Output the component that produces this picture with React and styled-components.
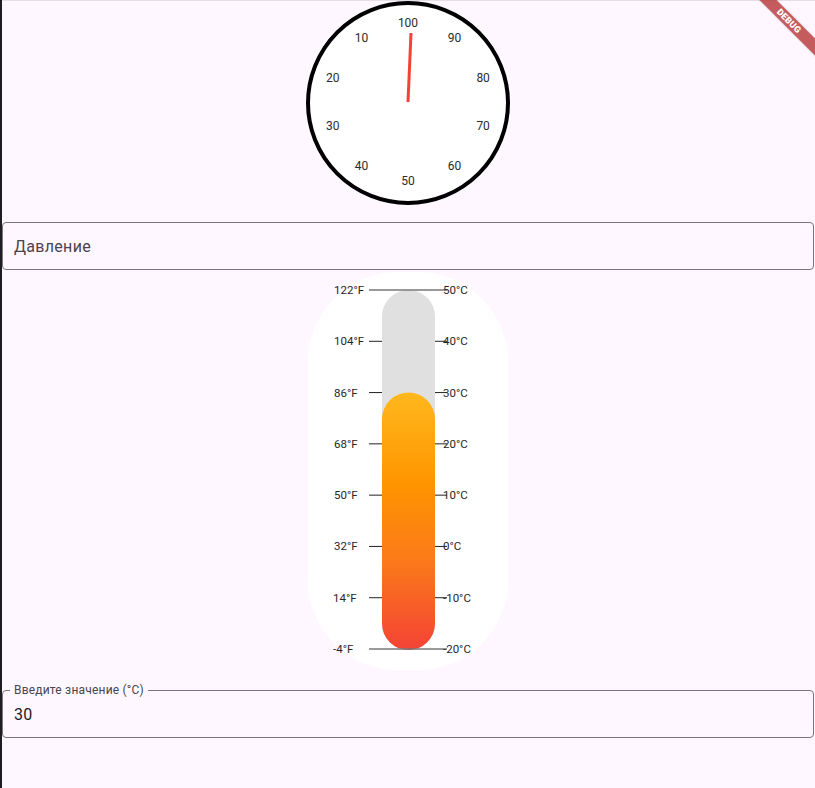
import React from "react";
import styled, { createGlobalStyle } from "styled-components";

const Global = createGlobalStyle`
  html, body { margin: 0; padding: 0; }
  body {
    background: #fef7ff;
    font-family: Roboto, "Noto Sans", "Liberation Sans", sans-serif;
    overflow: hidden;
  }
`;

const Screen = styled.div`
  position: relative;
  width: 815px;
  height: 788px;
  overflow: hidden;
  display: flex;
  background: #fef7ff;
`;

const EdgeStrip = styled.div`
  width: 2px;
  flex: 0 0 2px;
  background: #1f1d22;
`;

const Content = styled.div`
  flex: 1;
  display: flex;
  flex-direction: column;
  align-items: center;
  padding: 0 1px 0 0;
  border-top: 1px solid #e4dfe6;
`;

const GaugeSvg = styled.svg`
  display: block;
  width: 204px;
  height: 204px;
  margin-top: 0;
`;

const FieldBox = styled.div`
  box-sizing: border-box;
  align-self: stretch;
  height: 48px;
  margin-top: ${(p) => p.$mt}px;
  border: 1px solid #79747e;
  border-radius: 4px;
  display: flex;
  align-items: center;
  padding: 0 11px;
  position: relative;
`;

const Placeholder = styled.span`
  font-size: 16px;
  color: #49454f;
  letter-spacing: 0.3px;
`;

const Value = styled.span`
  font-size: 16px;
  color: #1d1b20;
  letter-spacing: 0.3px;
`;

const FloatLabel = styled.span`
  position: absolute;
  top: -8px;
  left: 7px;
  padding: 0 4px;
  background: #fef7ff;
  font-size: 12px;
  line-height: 14px;
  color: #49454f;
  letter-spacing: 0.2px;
`;

const ThermoCard = styled.div`
  width: 200px;
  height: 398px;
  margin-top: 2px;
  background: #ffffff;
  border-radius: 90px;
`;

const ThermoSvg = styled.svg`
  display: block;
  width: 200px;
  height: 398px;
`;

const Banner = styled.div`
  position: absolute;
  top: 15px;
  left: 729px;
  width: 120px;
  height: 12px;
  transform: rotate(45deg);
  background: rgba(176, 40, 40, 0.75);
  box-shadow: 0 0 2px rgba(0, 0, 0, 0.25);
  color: #fff;
  font-family: Roboto, "Liberation Sans", sans-serif;
  font-weight: 900;
  font-size: 9px;
  line-height: 12px;
  text-align: center;
  letter-spacing: 0.2px;
`;

function Gauge() {
  const cx = 102;
  const cy = 102;
  const labels = [];
  for (let i = 0; i < 10; i++) {
    const v = i === 0 ? 100 : i * 10;
    const th = (i * 36 * Math.PI) / 180;
    const x = cx - 79 * Math.sin(th);
    const y = cy - 1 - 79 * Math.cos(th);
    labels.push(
      <text
        key={v}
        x={x}
        y={y}
        textAnchor="middle"
        dominantBaseline="central"
        fontSize="12"
        fill="#2b2b2b"
        fontFamily="Roboto, sans-serif"
      >
        {v}
      </text>
    );
  }
  return (
    <GaugeSvg viewBox="0 0 204 204">
      <circle cx={cx} cy={cy} r={100} fill="#fff" stroke="#000" strokeWidth="4" />
      {labels}
      <line x1={102} y1={101} x2={105} y2={32} stroke="#f44336" strokeWidth="3" />
    </GaugeSvg>
  );
}

function Thermometer({ value }) {
  const top = 18;
  const bottom = 377;
  const max = 50;
  const min = -20;
  const yFor = (c) => top + ((max - c) / (max - min)) * (bottom - top);
  const steps = [];
  for (let c = 50; c >= -20; c -= 10) steps.push(c);
  const fillTop = yFor(value);
  return (
    <ThermoSvg viewBox="0 0 200 398">
      <defs>
        <linearGradient id="mercury" x1="0" y1="0" x2="0" y2="1">
          <stop offset="0" stopColor="#ffb81d" />
          <stop offset="0.35" stopColor="#ff9500" />
          <stop offset="0.65" stopColor="#fb7a19" />
          <stop offset="1" stopColor="#f44336" />
        </linearGradient>
      </defs>
      <rect x={74} y={top} width={53} height={bottom + 1 - top} rx={26.5} fill="#e0e0e0" />
      <rect x={74} y={fillTop} width={53} height={bottom + 1 - fillTop} rx={26.5} fill="url(#mercury)" />
      {steps.map((c) => {
        const y = yFor(c);
        const f = Math.round((c * 9) / 5 + 32);
        const edge = c === 50 || c === -20;
        return (
          <g key={c}>
            {edge ? (
              <line x1={61} y1={y} x2={139} y2={y} stroke="#777" strokeWidth="1.5" />
            ) : (
              <>
                <line x1={61} y1={y} x2={74} y2={y} stroke="#222" strokeWidth="1" />
                <line x1={127} y1={y} x2={139} y2={y} stroke="#222" strokeWidth="1" />
              </>
            )}
            <text
              x={c < 0 ? 25 : 26}
              y={y}
              textAnchor="start"
              dominantBaseline="central"
              fontSize="11.5"
              fill="#262626"
              fontFamily="Roboto, sans-serif"
            >
              {f}°F
            </text>
            <text
              x={135}
              y={y}
              textAnchor="start"
              dominantBaseline="central"
              fontSize="11.5"
              fill="#262626"
              fontFamily="Roboto, sans-serif"
            >
              {c}°C
            </text>
          </g>
        );
      })}
    </ThermoSvg>
  );
}

export default function App() {
  return (
    <>
      <Global />
      <Screen>
        <EdgeStrip />
        <Content>
          <Gauge />
          <FieldBox $mt={17}>
            <Placeholder>Давление</Placeholder>
          </FieldBox>
          <ThermoCard>
            <Thermometer value={30} />
          </ThermoCard>
          <FieldBox $mt={20}>
            <FloatLabel>Введите значение (°C)</FloatLabel>
            <Value>30</Value>
          </FieldBox>
        </Content>
        <Banner>DEBUG</Banner>
      </Screen>
    </>
  );
}
